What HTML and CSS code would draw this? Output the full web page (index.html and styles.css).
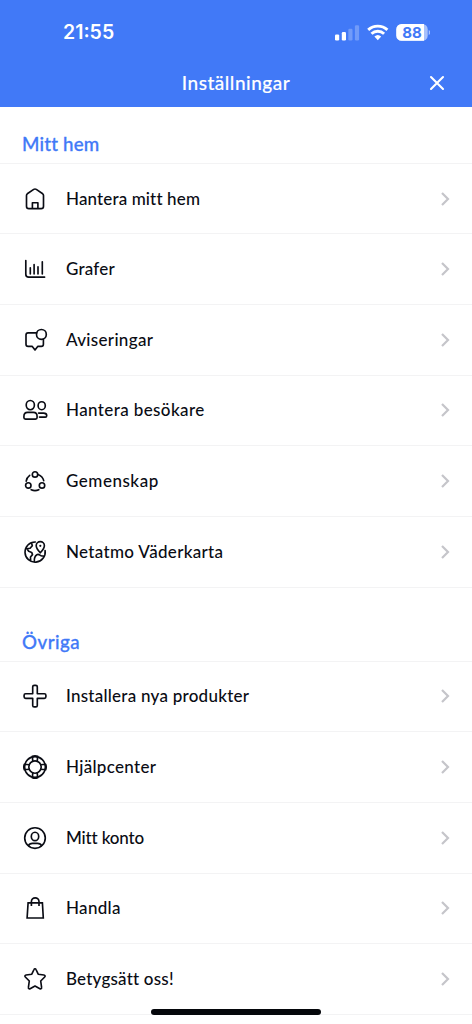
FILE: index.html
```html
<!DOCTYPE html>
<html lang="sv">
<head>
<meta charset="utf-8">
<title>Inställningar</title>
<link rel="stylesheet" href="styles.css">
</head>
<body>
<svg class="defs" aria-hidden="true"><symbol id="chevron" viewBox="0 0 10 16"><path d="M2 2 8 8 2 14"/></symbol></svg>
<div class="screen">
<header class="header">
  <div class="status">
    <span class="time">21:55</span>
    <svg class="signals" width="100" height="20" viewBox="0 0 100 20">
      <rect x="5" y="12.4" width="4.2" height="6" rx="1.2" fill="#fff"/>
      <rect x="11.8" y="10" width="4.2" height="8.4" rx="1.2" fill="#fff"/>
      <g fill="#fff" opacity=".25"><rect x="18.3" y="6.8" width="4.2" height="11.6" rx="1.2"/><rect x="24.9" y="3.2" width="4.2" height="15.2" rx="1.2"/></g>
      <g fill="none" stroke="#fff" stroke-width="2.9"><path d="M38.2 7.9a14 14 0 0 1 19.2 0M41.5 11.7a9.2 9.2 0 0 1 12.6 0"/></g>
      <path d="M44.4 14.6a5 5 0 0 1 6.8 0L47.8 18.3Z" fill="#fff"/>
      <rect x="66.3" y="2" width="31.4" height="16.7" rx="5.3" fill="#a8c2fb"/>
      <path d="M71.6 2H94V18.7H71.6a5.3 5.3 0 0 1-5.3-5.3V7.3a5.3 5.3 0 0 1 5.3-5.3Z" fill="#fff"/>
      <path d="M98.7 7.9c2.3.8 2.3 4.3 0 5.1Z" fill="#a8c2fb"/>
      <text class="charge" x="82" y="15.9" text-anchor="middle">88</text>
    </svg>
  </div>
  <div class="titlebar">
    <h1 class="title">Inställningar</h1>
    <svg class="close" width="16" height="16" viewBox="0 0 16 16"><path d="M2 2 14 14M14 2 2 14"/></svg>
  </div>
</header>
<main>
  <section class="group">
    <h2 class="heading">Mitt hem</h2>
    <ul class="list">
      <li class="row"><svg class="icon" viewBox="0 0 28 28"><path d="M5.5 10.4c0-.7.3-1.2.8-1.6l6.4-4.4c.8-.5 1.8-.5 2.6 0l6.4 4.4c.5.4.8.9.8 1.6v10.8c0 1.6-.8 2.4-2.4 2.4H7.9c-1.6 0-2.4-.8-2.4-2.4ZM11.4 23.4v-5.7h5.5v5.7"/></svg><span class="label snug">Hantera mitt hem</span><svg class="chevron"><use href="#chevron"/></svg></li>
      <li class="row"><svg class="icon" viewBox="0 0 28 28"><path d="M4.8 5.5v13.8c0 2 1 2.9 2.9 2.9h15.9M9.3 12.8V19M13.1 9.5V19M17 11.8V19M21.3 6.8V19"/></svg><span class="label">Grafer</span><svg class="chevron"><use href="#chevron"/></svg></li>
      <li class="row"><svg class="icon" viewBox="0 0 28 28"><path d="M15.8 6.8H7.1c-1.4 0-2.1.7-2.1 2.1v9.3c0 1.4.7 2.1 2.1 2.1h4L14 24l2.9-3.7h3.4c1.4 0 2.1-.7 2.1-2.1v-4.8"/><circle cx="20.4" cy="8.4" r="4.9"/></svg><span class="label loose">Aviseringar</span><svg class="chevron"><use href="#chevron"/></svg></li>
      <li class="row"><svg class="icon" viewBox="0 0 28 28"><ellipse cx="9.3" cy="9.1" rx="4.1" ry="4.6"/><ellipse cx="20.7" cy="9.7" rx="3.6" ry="4"/><path d="M2.9 20.5c0-2.6 1.3-4.1 3.7-4.1h5.8c2.4 0 3.7 1.5 3.7 4.1v1c0 1.1-.5 1.6-1.6 1.6h-10c-1.1 0-1.6-.5-1.6-1.6ZM17.6 17.1h4.9c2 0 3.2 1.1 3.2 2.5v.1c0 .9-.5 1.4-1.4 1.4h-5.8"/></svg><span class="label wide">Hantera besökare</span><svg class="chevron"><use href="#chevron"/></svg></li>
      <li class="row"><svg class="icon" viewBox="0 0 28 28"><circle cx="14" cy="7.4" r="2.7"/><circle cx="7.3" cy="18.4" r="2.7"/><circle cx="21" cy="18.4" r="2.7"/><path d="M5.2 14.2c.3-2.4 1.4-4.4 3.5-5.9M17 7.4c3 1.2 5.1 3.2 5.7 6.3M10.2 22.7c2.5 1.2 5.1 1.2 7.6 0"/></svg><span class="label wider">Gemenskap</span><svg class="chevron"><use href="#chevron"/></svg></li>
      <li class="row"><svg class="icon" viewBox="0 0 28 28"><path d="M14.3 4A10.1 10.1 0 1 0 24.1 12.6M19.3 14.8c-2.4-2.6-4.1-4.8-4.1-7.1a4.1 4.1 0 0 1 8.2 0c0 2.3-1.7 4.5-4.1 7.1ZM10.5 4.8l.8 2.9-2.2 2.6-3.3.4M5.9 10.8l1.8 2.5 3 1.1.8 2.2-2 2.4.1 3.5M13.4 24c-.4-3.4.4-6 2.5-7.3 2.2-1.2 3.2 1.3 5 1.3h2.2"/><circle class="dot" cx="19.3" cy="7.8" r="1.1"/></svg><span class="label loose">Netatmo Väderkarta</span><svg class="chevron"><use href="#chevron"/></svg></li>
    </ul>
  </section>
  <section class="group second">
    <h2 class="heading">Övriga</h2>
    <ul class="list">
      <li class="row"><svg class="icon" viewBox="0 0 28 28"><path d="M11.7 4.8c0-1 .5-1.5 1.5-1.5h1.6c1 0 1.5.5 1.5 1.5v6.9h7.1c1 0 1.5.5 1.5 1.5v1.6c0 1-.5 1.5-1.5 1.5h-7.1v7.1c0 1-.5 1.5-1.5 1.5h-1.6c-1 0-1.5-.5-1.5-1.5v-7.1H4.6c-1 0-1.5-.5-1.5-1.5v-1.6c0-1 .5-1.5 1.5-1.5h7.1Z"/></svg><span class="label near">Installera nya produkter</span><svg class="chevron"><use href="#chevron"/></svg></li>
      <li class="row"><svg class="icon" viewBox="0 0 28 28"><circle cx="14" cy="14" r="10.4"/><circle cx="14" cy="14" r="6.2"/><path d="M11.8 8.2 11.3 3.3Q14 2.3 16.7 3.3L16.2 8.2M11.8 19.8 11.3 24.7Q14 25.7 16.7 24.7L16.2 19.8M8.2 11.8 3.3 11.3Q2.3 14 3.3 16.7L8.2 16.2M19.8 11.8 24.7 11.3Q25.7 14 24.7 16.7L19.8 16.2"/></svg><span class="label loose">Hjälpcenter</span><svg class="chevron"><use href="#chevron"/></svg></li>
      <li class="row"><svg class="icon" viewBox="0 0 28 28"><circle cx="14" cy="14" r="10.3"/><ellipse cx="14" cy="12.4" rx="3.7" ry="4.2"/><path d="M7.5 21.6c.6-1.5 2-2.2 4-2.2h5c2 0 3.4.7 4 2.2"/></svg><span class="label tight">Mitt konto</span><svg class="chevron"><use href="#chevron"/></svg></li>
      <li class="row"><svg class="icon" viewBox="0 0 28 28"><path class="sharp" d="M7.1 8.8h14.3l.9 15.2H6.1ZM10.4 12V7.6a3.8 3.8 0 0 1 7.6 0V12"/></svg><span class="label loose">Handla</span><svg class="chevron"><use href="#chevron"/></svg></li>
      <li class="row"><svg class="icon" viewBox="0 0 28 28"><path d="M13 4.5c.4-1 1.6-1 2 0l2.2 4.7 5.7.8c1.2.2 1.6 1.2.8 2l-4 4 .9 6.4c.2 1.2-.7 1.8-1.7 1.3L14 21l-4.9 2.7c-1 .5-1.9-.1-1.7-1.3l.9-6.4-4-4c-.8-.8-.4-1.8.8-2l5.7-.8Z"/></svg><span class="label">Betygsätt oss!</span><svg class="chevron"><use href="#chevron"/></svg></li>
    </ul>
  </section>
</main>
<div class="home-indicator"></div>
</div>
</body>
</html>
```
FILE: styles.css
```css
* { box-sizing: border-box; }
body { margin: 0; background: #fff; color: #0a0c14; font-family: Lato, sans-serif; }
.defs { position: absolute; width: 0; height: 0; }
.screen { position: relative; height: 1024px; overflow: hidden; }
.header { height: 107.4px; background: #4179f7; color: #fff; }
.status { display: flex; justify-content: space-between; align-items: center; height: 63px; padding: 0 42px 0 63px; }
.time { font: 600 19.5px/24px Inter, sans-serif; padding-top: 1px; }
.signals { display: block; }
.charge { font: 700 15px Inter, sans-serif; fill: #4179f7; }
.titlebar { display: grid; grid-template-columns: 1fr auto 1fr; align-items: center; height: 40px; padding: 0 27px; }
.title { grid-column: 2; margin: 0; font-size: 19px; line-height: 24px; font-weight: 500; letter-spacing: .5px; -webkit-text-stroke: .15px currentColor; }
.close { justify-self: end; fill: none; stroke: #fff; stroke-width: 2.1; stroke-linecap: round; }
.heading { display: flex; align-items: flex-end; height: 55.3px; margin: 0; padding: 0 22px 7px; color: #4179f7; font-size: 18.7px; line-height: 24px; font-weight: 500; letter-spacing: .2px; -webkit-text-stroke: .3px currentColor; }
.second .heading { height: 73px; letter-spacing: .5px; }
.list { margin: 0; padding: 0; list-style: none; border-top: 1px solid #f3f3f4; }
.row { display: flex; align-items: center; height: 70.67px; padding: 0 21px; border-bottom: 1px solid #f3f3f4; }
.icon { width: 28px; height: 28px; flex: none; fill: none; stroke: #0a0c14; stroke-width: 1.65; stroke-linecap: round; stroke-linejoin: round; }
.dot { fill: #0a0c14; stroke: none; }
.sharp { stroke-linejoin: miter; stroke-linecap: butt; }
.label { flex: 1; margin-left: 17px; font-size: 17px; line-height: 24px; font-weight: 500; letter-spacing: .2px; white-space: nowrap; }
.tight { letter-spacing: -.15px; }
.snug { letter-spacing: .13px; }
.near { letter-spacing: .25px; }
.loose { letter-spacing: .32px; }
.wide { letter-spacing: .39px; }
.wider { letter-spacing: .52px; }
.chevron { width: 10px; height: 16px; margin-right: .7px; fill: none; stroke: #c5c5ca; stroke-width: 2.2; }
.home-indicator { position: absolute; left: 151px; top: 1009px; width: 170px; height: 6px; border-radius: 3px; background: #05070b; }
```
